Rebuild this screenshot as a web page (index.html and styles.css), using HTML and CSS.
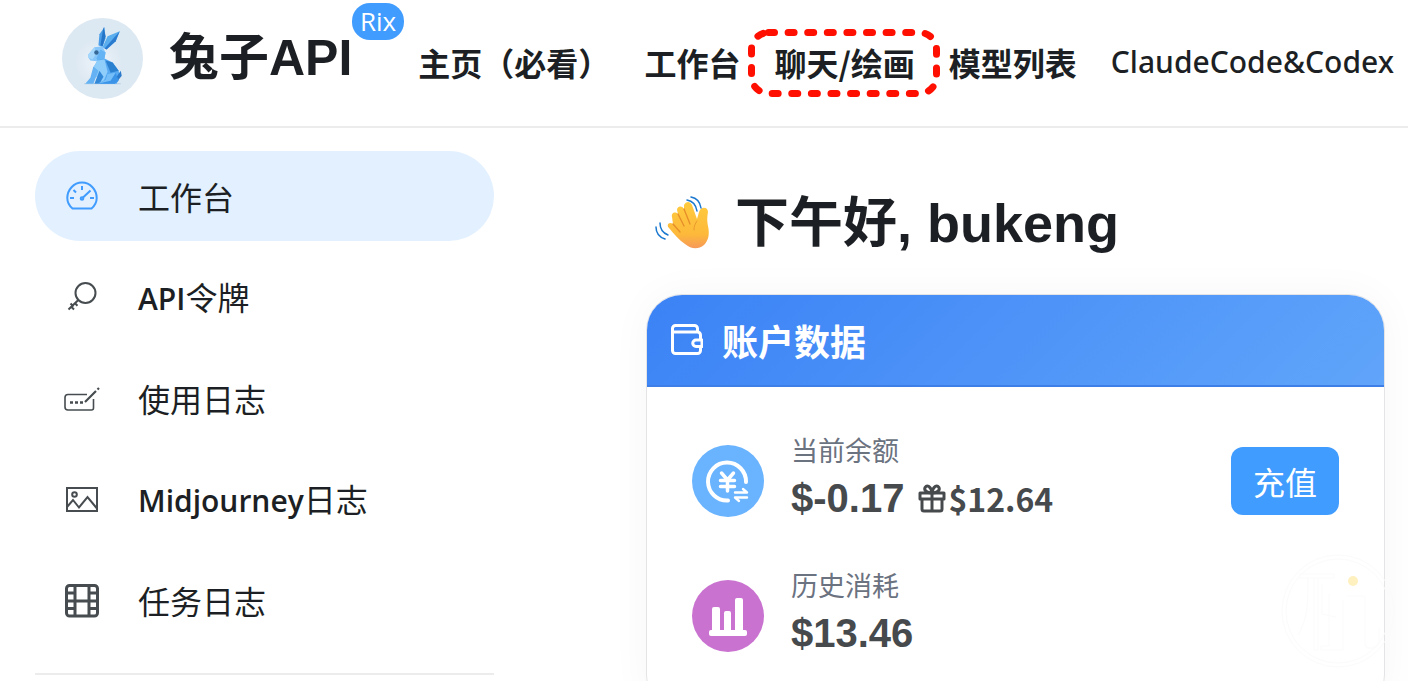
FILE: index.html
```html
<!DOCTYPE html>
<html lang="zh-CN">
<head>
    <meta charset="utf-8">
    <title>兔子API</title>
    <link rel="stylesheet" href="styles.css">
</head>

<body>
    <header class="header">
        <a class="brand" href="#">
            <svg class="logo" viewBox="0 0 80 80" aria-hidden="true">
                <defs>
                    <radialGradient id="glow">
                        <stop offset="0" stop-color="#eff4fa"/>
                        <stop offset="1" stop-color="#dce8f2"/>
                    </radialGradient>
                </defs>
                <circle cx="40" cy="40" r="40" fill="#dce8f2"/>
                <circle cx="36" cy="44" r="24" fill="url(#glow)"/>
                <path d="M22 65h36" stroke="#b4cde4" stroke-width="1"/>
                <path d="M36 27l1-11 5-7 1 11-3 9z" fill="#4a9de6"/>
                <path d="M41 9l2 9-3 10-2-1z" fill="#2474c8"/>
                <path d="M40 29l5-11 12-5-4 10-9 8z" fill="#5aaeee"/>
                <path d="M57 13l-4 10-9 8-2-1z" fill="#2a7bd0"/>
                <path d="M26 36l6-7 8-1 3 6-1 6-6 3-8-1-2-3z" fill="#86c6fa"/>
                <path d="M26 36l6-7 2 6-4 6-4-2z" fill="#a5d7fc"/>
                <path d="M38 31l5 3-1 6-6 3-2-3z" fill="#63b3f5"/>
                <circle cx="34" cy="34" r="2.200" fill="#356897"/>
                <path d="M35 42l7-2 8 4 6 8 1 6-3 7H38l-5-9-2-7z" fill="#58aaf2"/>
                <path d="M43 42l7 2 6 8-8 2z" fill="#2c80d0"/>
                <path d="M35 42l7-1 3 12-5 12-7-9-2-7z" fill="#8fcdfb"/>
                <path d="M54 58l4-6 1 5-4 5z" fill="#2b7acb"/>
                <path d="M31 48l5 4-5 13h-8l5-6z" fill="#64b2f3"/>
                <path d="M37 52l4 6-4 7h-5z" fill="#3488d8"/>
                <path d="M45 55l8-1 3 8-4 3H35l8-4z" fill="#3b94e8"/>
                <path d="M45 55l8-1-5 8-13 3 8-4z" fill="#76bef8"/>
            </svg>
            <span class="brand-name">兔子API</span>
            <span class="badge">Rix</span>
        </a>
        <nav class="nav">
            <a href="#">主页（必看）</a>
            <a href="#">工作台</a>
            <a href="#" class="marked">聊天/绘画
                <svg class="mark" viewBox="0 0 194 70" aria-hidden="true">
                    <rect x="4.500" y="4.500" width="185" height="61" rx="17"/>
                </svg>
            </a>
            <a href="#">模型列表</a>
            <a href="#" class="latin">ClaudeCode&amp;Codex</a>
        </nav>
    </header>
    <div class="layout">
        <aside class="sidebar">
            <ul class="menu">
                <li>
                    <a class="menu-item active" href="#">
                        <svg class="icon" viewBox="0 0 36 36">
                            <path d="M8.500 30.500h19c3.300-2.800 5.200-6.300 5.200-10.500C32.700 11.900 26.300 4.500 18 4.500S3.300 11.900 3.300 20C3.300 24.200 5.200 27.700 8.500 30.500z"/>
                            <path d="M18 8v4M9.500 12l2.500 2.500M6 20h4M26 20h4M19 19.500l7.500-7"/>
                            <circle cx="18" cy="20.500" r="1.300"/>
                        </svg>
                        <span>工作台</span>
                    </a>
                </li>
                <li>
                    <a class="menu-item" href="#">
                        <svg class="icon" viewBox="0 0 36 36">
                            <circle cx="21.500" cy="14" r="10"/>
                            <path d="M14.300 21L4.500 30.500M7 27.500l3 3M10.500 23.800l3 3M6.500 24.500l3 3"/>
                        </svg>
                        <span><span class="latin">API</span>令牌</span>
                    </a>
                </li>
                <li>
                    <a class="menu-item" href="#">
                        <svg class="icon" viewBox="0 0 36 36">
                            <path d="M23 14.500H4a3 3 0 0 0-3 3v9.500a3 3 0 0 0 3 3h23.500a2 2 0 0 0 2-2V19" stroke-width="1.600"/>
                            <path d="M21 22l11-11M33.500 9.500l1.500-1.500" stroke-width="2.200"/>
                            <path d="M6 22.500h3M11 22.500h3M16 22.500h3" stroke-width="2.600"/>
                        </svg>
                        <span>使用日志</span>
                    </a>
                </li>
                <li>
                    <a class="menu-item" href="#">
                        <svg class="icon" viewBox="0 0 36 36">
                            <path d="M3 7h30v23H3z"/>
                            <circle cx="10.500" cy="13.500" r="2.300"/>
                            <path d="M3 26l6-7 6 7.500 8.500-10.500L33 27.500"/>
                        </svg>
                        <span><span class="latin">Midjourney</span>日志</span>
                    </a>
                </li>
                <li>
                    <a class="menu-item" href="#">
                        <svg class="icon film" viewBox="0 0 36 36">
                            <rect x="2.500" y="3.500" width="31" height="30.500" rx="3"/>
                            <path d="M11 4v30M25 4v30M3 11h8M3 19h30M3 26.500h8M25 11h8M25 26.500h8"/>
                        </svg>
                        <span>任务日志</span>
                    </a>
                </li>
            </ul>
        </aside>
        <main class="main">
            <h1 class="greeting">
                <svg class="wave" viewBox="0 0 56 56" aria-hidden="true">
                    <defs>
                        <linearGradient id="hand" x1="0" y1="0" x2="0" y2="1">
                            <stop offset="0" stop-color="#ffcb3f"/>
                            <stop offset="0.700" stop-color="#fdb93a"/>
                            <stop offset="1" stop-color="#f6985a"/>
                        </linearGradient>
                    </defs>
                    <path d="M15 33c-3-3 0-7 4-4l-1-7c-1-4 3-6 6-3l-1-4c0-4 5-5 7-1l0-4c2-4 6-4 8 0l5 14 2-7c2-6 9-5 9 0-1 6-1 9 0 14 2 9 0 15-4 19-6 5-13 4-19-1-6-4-11-10-16-16z" fill="url(#hand)"/>
                    <path d="M19 29l7 8M24 19l6 12M30 14l6 15" fill="none" stroke="#e58d2a" stroke-width="1.300" stroke-linecap="round"/>
                    <path d="M43 26c-2 3-3 5-3 9" fill="none" stroke="#e99a2d" stroke-width="1" stroke-linecap="round"/>
                    <path d="M33 5c6 1 9 5 10 11M37 2c6 1 9 5 10 11M6 28c0 6 3 10 8 12M2 32c0 6 3 10 9 12" fill="none" stroke="#1b78cf" stroke-width="1.500" stroke-linecap="round"/>
                </svg>
                <span>下午好, bukeng</span>
            </h1>
            <section class="card">
                <h2 class="card-head">
                    <svg class="wallet" viewBox="0 0 32 32" aria-hidden="true">
                        <path d="M1.500 4.500v22a3 3 0 0 0 3 3h22a3 3 0 0 0 3-3v-3.500M1.500 4.500a3 3 0 0 1 3-3h19a3 3 0 0 1 3 3V8M1.500 8h25a3 3 0 0 1 3 3v4.500"/>
                        <path d="M25 16h6v6.500h-6a3.200 3.200 0 0 1 0-6.500z"/>
                    </svg>
                    <span>账户数据</span>
                </h2>
                <div class="card-body">
                    <div class="row">
                        <svg class="round" viewBox="0 0 72 72" aria-hidden="true">
                            <circle cx="36" cy="36" r="36" fill="#69b3ff"/>
                            <g fill="none" stroke="#fff" stroke-linecap="round" stroke-linejoin="round">
                                <path d="M36 55.500A19 19 0 1 1 54 37" stroke-width="4"/>
                                <path d="M29.500 28l6 7 6-7M28.500 35.500h14M28.500 41.500h14M35.500 35.500v10.500" stroke-width="3.500"/>
                                <path d="M43 47.500h12l-4-3.500M55 52.500H43l4 3.500" stroke-width="2.400"/>
                            </g>
                        </svg>
                        <div class="info">
                            <span class="label">当前余额</span>
                            <div class="amount">
                                <strong class="value">$-0.17</strong>
                                <span class="gift">
                                    <svg class="gift-icon" viewBox="0 0 28 30" aria-hidden="true">
                                        <path d="M2 10h24v6H2zM4 16v10a2 2 0 0 0 2 2h16a2 2 0 0 0 2-2V16M14 10v18"/>
                                        <path d="M14 10C8 10 6 7 7 4.500 9 1.500 13 3 14 10zM14 10c6 0 8-3 7-5.500C19 1.500 15 3 14 10z"/>
                                    </svg>
                                    <span>$12.64</span>
                                </span>
                            </div>
                        </div>
                        <button class="btn" type="button">充值</button>
                    </div>
                    <div class="row">
                        <svg class="round" viewBox="0 0 72 72" aria-hidden="true">
                            <circle cx="36" cy="36" r="36" fill="#c972d0"/>
                            <g fill="#fff">
                                <rect x="17" y="50" width="38" height="6" rx="2"/>
                                <rect x="20" y="27" width="8" height="25" rx="2"/>
                                <rect x="32" y="31" width="7" height="21" rx="2"/>
                                <rect x="43" y="18" width="8" height="34" rx="2"/>
                            </g>
                        </svg>
                        <div class="info">
                            <span class="label">历史消耗</span>
                            <div class="amount">
                                <strong class="value">$13.46</strong>
                            </div>
                        </div>
                    </div>
                </div>
            </section>
        </main>
    </div>
    <svg class="watermark" viewBox="0 0 114 114" aria-hidden="true">
        <g fill="none" stroke="#fbfbfb">
            <circle cx="57" cy="57" r="56"/>
            <circle cx="57" cy="57" r="52"/>
            <path d="M17 20h36v4H17M27 24c0 24 0 40-10 57M33 24v72h4V24M41 30v30l14 3M48 40v52h-8v4h22V46M66 42h18v48c0 6 12 6 14-2V74"/>
        </g>
        <circle cx="72" cy="27" r="5" fill="#fff0c0"/>
    </svg>
</body>

</html>
```
FILE: styles.css
```css
* {
    box-sizing: border-box;
}
body {
    margin: 0;
    height: 100vh;
    overflow: hidden;
    position: relative;
    background: #fff;
    color: #1c1f23;
    font-size: 32px;
    font-family: "Noto Sans CJK SC", sans-serif;
}
a {
    color: inherit;
    text-decoration: none;
}
.latin {
    font-family: "Open Sans", sans-serif;
    font-size: 30px;
    font-weight: 600;
}
.header {
    display: flex;
    align-items: center;
    height: 128px;
    padding: 0 12px 10px 62px;
    border-bottom: 2px solid #ececec;
    white-space: nowrap;
}
.brand {
    display: flex;
    align-items: center;
    position: relative;
    flex: none;
}
.logo {
    width: 81px;
    height: 81px;
    margin-right: 26px;
}
.brand-name {
    font-family: "Liberation Sans", "Noto Sans CJK SC", sans-serif;
    font-size: 50px;
    font-weight: bold;
    line-height: 80px;
}
.badge {
    position: absolute;
    left: 290px;
    top: -15px;
    padding: 0 8px;
    border-radius: 18px;
    background: #409cff;
    color: #fff;
    font-family: "Open Sans", sans-serif;
    font-size: 26px;
    line-height: 37px;
}
.nav {
    display: flex;
    gap: 34px;
    margin: 8px 0 0 66px;
    font-weight: bold;
    line-height: 40px;
}
.nav .latin {
    font-family: "Noto Sans", sans-serif;
    font-weight: 500;
}
.marked {
    position: relative;
}
.mark {
    position: absolute;
    left: -27px;
    top: -14px;
    width: 194px;
    height: 70px;
    fill: none;
    stroke: #ff0f00;
    stroke-width: 7px;
    stroke-linecap: round;
    stroke-dasharray: 6 13.6;
}
.layout {
    display: flex;
    align-items: flex-start;
}
.sidebar {
    flex: none;
    width: 494px;
    padding: 23px 0 0 35px;
}
.menu {
    display: flex;
    flex-direction: column;
    gap: 11px;
    margin: 0;
    padding: 0 0 28px;
    border-bottom: 2px solid #ececec;
    list-style: none;
}
.menu-item {
    display: flex;
    align-items: center;
    gap: 38px;
    height: 90px;
    padding: 0 29px;
    border-radius: 45px;
    line-height: 40px;
}
.menu-item.active {
    background: #e2f0ff;
}
.icon {
    width: 36px;
    height: 36px;
    fill: none;
    stroke: #464c4f;
    stroke-width: 2px;
}
.film {
    stroke-width: 3px;
}
.active .icon {
    stroke: #409cff;
}
.main {
    flex: 1;
    min-width: 0;
    padding: 55px 23px 0 152px;
}
.greeting {
    display: flex;
    align-items: center;
    gap: 25px;
    margin: 0 0 31px;
    padding-left: 8px;
    font-family: "Liberation Sans", "Noto Sans CJK SC", sans-serif;
    font-size: 54px;
    line-height: 80px;
}
.wave {
    width: 56px;
    height: 56px;
}
.card {
    border: 1px solid #e4e4e6;
    border-radius: 36px;
    overflow: hidden;
    box-shadow: 0 0 40px rgba(0, 0, 0, 0.04);
}
.card-head {
    display: flex;
    align-items: center;
    gap: 19px;
    height: 92px;
    margin: 0;
    padding: 0 24px;
    border-bottom: 2px solid #3d7fe6;
    background: linear-gradient(135deg, #3b82f6, #60a5fa);
    color: #fff;
    font-size: 36px;
    line-height: 52px;
}
.wallet {
    width: 32px;
    height: 32px;
    fill: none;
    stroke: #fff;
    stroke-width: 3px;
    stroke-linejoin: round;
}
.card-body {
    display: flex;
    flex-direction: column;
    gap: 39px;
    padding: 46px 45px;
}
.row {
    display: flex;
    align-items: center;
    height: 96px;
}
.round {
    width: 72px;
    height: 72px;
    margin-right: 27px;
}
.info {
    flex: 1;
    padding-bottom: 6px;
}
.label {
    display: block;
    color: #6b7280;
    font-size: 27px;
    line-height: 40px;
}
.amount {
    display: flex;
    align-items: center;
    gap: 14px;
    color: #464a4d;
    line-height: 56px;
}
.value {
    font-family: "Liberation Sans", sans-serif;
    font-size: 40px;
}
.gift {
    display: flex;
    align-items: center;
    font-weight: bold;
}
.gift-icon {
    width: 28px;
    height: 30px;
    margin-right: 2px;
    fill: none;
    stroke: #464a4d;
    stroke-width: 3px;
    stroke-linejoin: round;
}
.btn {
    width: 108px;
    height: 68px;
    padding: 0;
    border: none;
    border-radius: 12px;
    background: #409cff;
    color: #fff;
    font: inherit;
    cursor: pointer;
}
.watermark {
    position: absolute;
    right: 13px;
    bottom: 13px;
    width: 114px;
    height: 114px;
    pointer-events: none;
}
```
